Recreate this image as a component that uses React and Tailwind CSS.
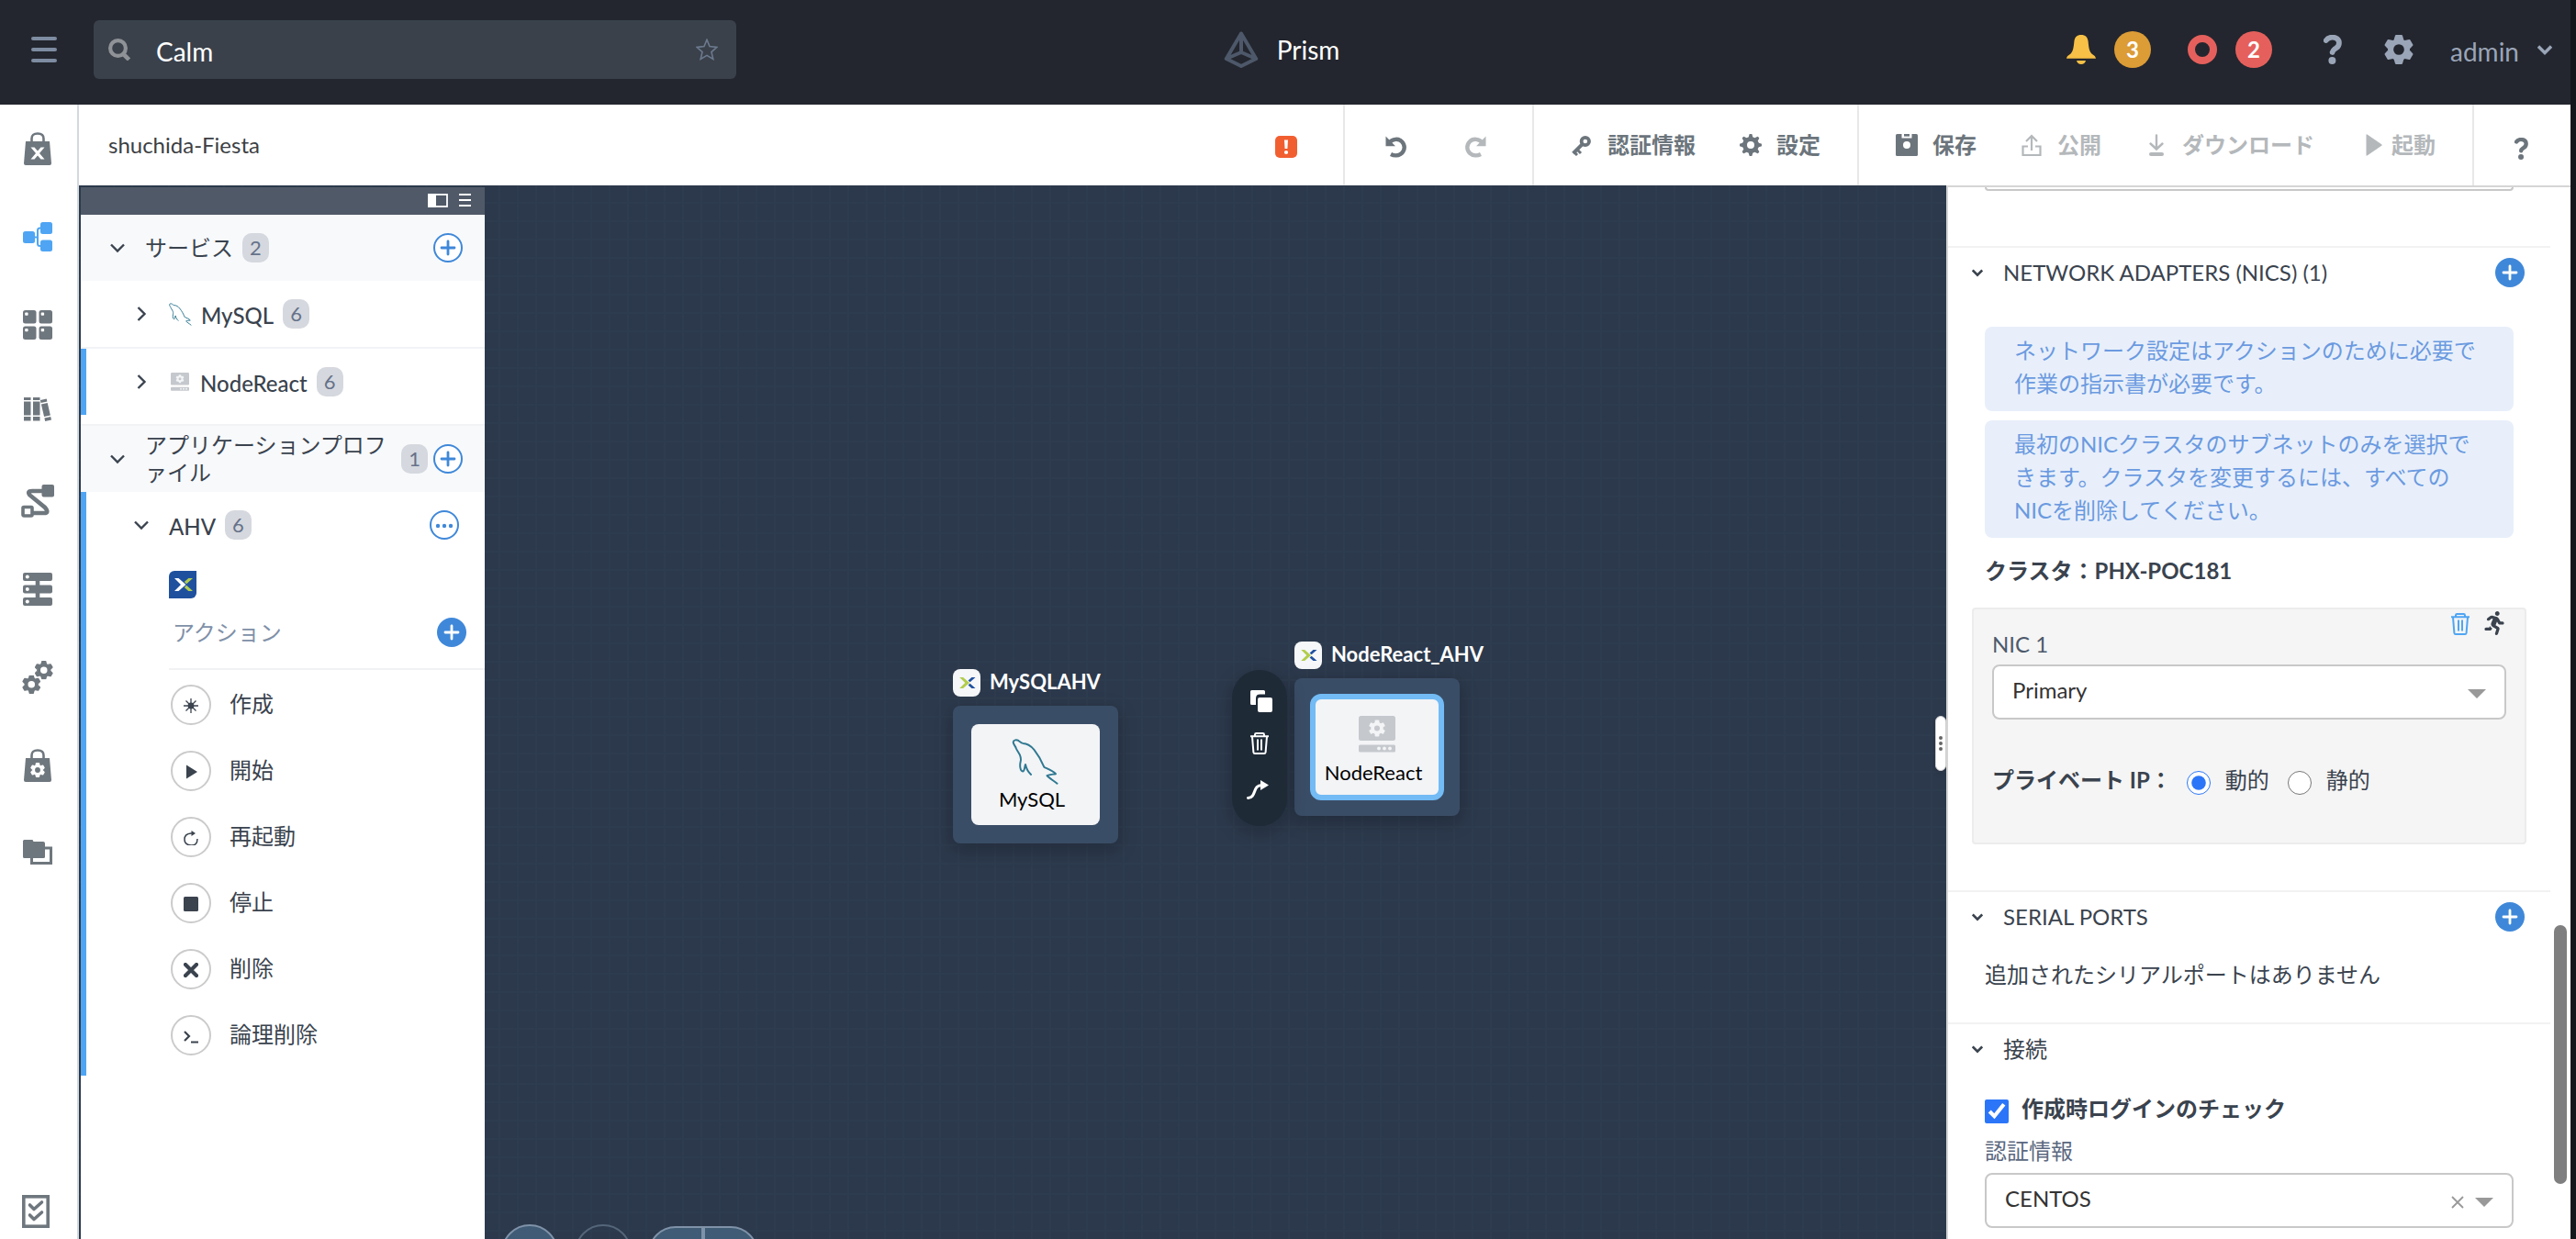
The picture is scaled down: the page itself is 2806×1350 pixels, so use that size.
import React from "react";
import { FaRunning } from "react-icons/fa";

/* ---------- icons ---------- */

function Gear({ className, teeth = 6, tooth = 7, hole = 4 }) {
  const ring = 9 - hole;
  return (
    <svg viewBox="0 0 24 24" className={className} fill="currentColor" aria-hidden="true">
      <circle cx="12" cy="12" r={hole + ring / 2} fill="none" stroke="currentColor" strokeWidth={ring} />
      {Array.from({ length: teeth }, (_, i) => (
        <path
          key={i}
          d={`M${12 - tooth / 2} 4 L${12 - tooth / 2 + 1} 0.6 Q${12 - tooth / 2 + 1.2} 0 ${12 - tooth / 2 + 1.8} 0 H${12 + tooth / 2 - 1.8} Q${12 + tooth / 2 - 1.2} 0 ${12 + tooth / 2 - 1} 0.6 L${12 + tooth / 2} 4 Z`}
          transform={`rotate(${(360 / teeth) * i} 12 12)`}
        />
      ))}
    </svg>
  );
}

function Question({ className }) {
  return (
    <svg viewBox="0 0 20 32" className={className} aria-hidden="true">
      <path d="M2.800 6C5 2.600 10 2.200 13 3.200C18 5 18 11.500 14 14.200C11.500 16 10 16.400 9.600 19" fill="none" stroke="currentColor" strokeWidth="5.800" strokeLinecap="round" />
      <circle cx="9.400" cy="28" r="4" fill="currentColor" />
    </svg>
  );
}

function Chevron({ className, width = 2.4 }) {
  return (
    <svg viewBox="0 0 16 16" className={className} fill="none" stroke="currentColor" strokeWidth={width} aria-hidden="true">
      <path d="M1 4.500L8 11.500L15 4.500" />
    </svg>
  );
}

function PlusCircle({ filled }) {
  return (
    <svg viewBox="0 0 32 32" className="size-8" aria-hidden="true">
      <circle cx="16" cy="16" r={filled ? 16 : 15} fill={filled ? "#3f88d9" : "#fff"} stroke={filled ? "none" : "#3f88d9"} strokeWidth="2" />
      <path d="M16 9V23M9 16H23" stroke={filled ? "#fff" : "#3f88d9"} strokeWidth="2.800" strokeLinecap="round" />
    </svg>
  );
}

function Trash({ className }) {
  return (
    <svg viewBox="0 0 20 24" className={className} fill="none" stroke="currentColor" strokeWidth="2" strokeLinejoin="round" aria-hidden="true">
      <path d="M0 4.200H20M5 4V2.400Q5 1 6.400 1H13.600Q15 1 15 2.400V4" />
      <path d="M2 4.500L3.400 21.600Q3.600 23 5 23H15Q16.400 23 16.600 21.600L18 4.500" />
      <path d="M8 7.500V19.500M12 7.500V19.500" />
    </svg>
  );
}

function CrossMark({ left, right, className }) {
  return (
    <svg viewBox="0 0 30 30" className={className} aria-hidden="true">
      <path d="M6 8H10.500L18.500 15L10.500 22H6L13 15Z" fill={left} />
      <path d="M26 8H21.300L16.800 12L19.200 14.200ZM26 22H21.300L16.800 18L19.200 15.800Z" fill={right} />
    </svg>
  );
}

function Dolphin({ className, width = 1.6 }) {
  return (
    <svg viewBox="-1 -1 52 51" className={className} fill="none" stroke="#2f7891" strokeWidth={width} strokeLinejoin="round" strokeLinecap="round" aria-hidden="true">
      <path d="M20 38.700C17 36 14.800 32 13.800 27.500C12.800 30 12.800 35.200 10.800 35.300C8.400 35 7 30 8.400 24C9.200 21 8.600 19.500 7.600 17C6 13.500 4.600 12.400 3.400 9.600C2.600 7 0.200 5 0.200 2.600C0.600 0 4 -0.200 6 1C8 2.400 9 3.600 11 4C16 4 20 7 23.400 11C29 18 32 24 34.600 30.600C39 32.600 44.600 34.600 47.400 38C44 38.600 40 38.600 37.800 40C39.600 42.400 45 45.400 49 48.700" />
    </svg>
  );
}

function Machine({ className }) {
  return (
    <svg viewBox="0 0 40 40" className={className} aria-hidden="true">
      <rect width="40" height="27" rx="2.500" fill="#c5c8cd" />
      <rect y="31.500" width="40" height="8" rx="1.500" fill="#c5c8cd" />
      <g fill="#f3f4f6">
        {[0, 60, 120].map((a) => (
          <rect key={a} x="17.600" y="4.500" width="4.800" height="18" rx="1" transform={`rotate(${a} 20 13.5)`} />
        ))}
        <circle cx="20" cy="13.500" r="6.800" />
        <circle cx="22" cy="35.500" r="1.900" />
        <circle cx="28" cy="35.500" r="1.900" />
        <circle cx="34" cy="35.500" r="1.900" />
      </g>
      <circle cx="20" cy="13.500" r="3" fill="#c5c8cd" />
    </svg>
  );
}

function Redo({ className }) {
  return (
    <svg viewBox="0 0 24 24" className={className} aria-hidden="true">
      <path d="M20 8C16.500 3 9.500 2.600 6 6.200C2.200 10.200 2.600 15.600 6 18.800C9.500 22 14.500 21.800 18 20" fill="none" stroke="currentColor" strokeWidth="4.400" />
      <path d="M23.500 0.600V11.200H13Z" fill="currentColor" />
    </svg>
  );
}

/* ---------- top bar ---------- */

function TopBar() {
  return (
    <header className="flex h-[114px] shrink-0 items-center bg-[#23262e] pb-1.5 text-white">
      <div className="flex flex-1 items-center">
        <button aria-label="メニュー" className="ml-[34px] flex w-7 flex-col gap-2">
          <span className="h-1 rounded-sm bg-[#7e8ca1]" />
          <span className="h-1 rounded-sm bg-[#7e8ca1]" />
          <span className="h-1 rounded-sm bg-[#7e8ca1]" />
        </button>
        <div className="ml-10 flex h-16 w-[700px] items-center rounded-md bg-[#3a414b] px-4">
          <svg viewBox="0 0 24 24" className="size-6 text-[#8f9297]" fill="none" stroke="currentColor" aria-hidden="true">
            <circle cx="10.500" cy="10.500" r="8.400" strokeWidth="4.200" />
            <path d="M16 16.500L22.500 23" strokeWidth="4.600" />
          </svg>
          <input aria-label="検索" defaultValue="Calm" className="ml-7 min-w-0 flex-1 bg-transparent pt-1 text-[28px] leading-9 outline-none" />
          <button aria-label="お気に入り" className="mr-1">
            <svg viewBox="0 0 24 24" className="size-6" fill="none" stroke="#6c7a8f" strokeWidth="1.600" aria-hidden="true">
              <path d="M12 1.300L15 8.600L22.900 9.400L17 14.600L18.800 22.400L12 18.400L5.200 22.400L7 14.600L1.100 9.400L9 8.600Z" />
            </svg>
          </button>
        </div>
      </div>
      <div className="flex items-center gap-5 pr-2">
        <svg viewBox="0 0 38 40" className="h-10 w-[38px]" fill="none" stroke="#4d586a" strokeWidth="4" strokeLinejoin="round" aria-hidden="true">
          <path d="M19 2.500L2.800 30L19 38L35.200 30ZM19 4V23M2.800 30L19 23L35.200 30" />
        </svg>
        <span className="text-[28px] leading-9">Prism</span>
      </div>
      <div className="flex flex-1 items-center justify-end">
        <svg viewBox="0 0 32 32" className="size-8" fill="#f7c046" aria-hidden="true">
          <path d="M16 0C11.500 0 9 2.400 8.400 7C7.800 13 7.400 17.500 4.600 20.600C3 22.400 0.600 22.600 0 25.800H32C31.400 22.600 29 22.400 27.400 20.600C24.600 17.500 24.200 13 23.600 7C23 2.400 20.500 0 16 0Z" />
          <path d="M11 28H21Q20 32 16 32Q12 32 11 28Z" />
        </svg>
        <span className="ml-5 flex size-10 items-center justify-center rounded-full bg-[#dc9c36] text-2xl font-bold">3</span>
        <span className="ml-10 size-8 rounded-full border-8 border-[#e5605c]" />
        <span className="ml-5 flex size-10 items-center justify-center rounded-full bg-[#e5605c] text-2xl font-bold">2</span>
        <button aria-label="ヘルプ" className="ml-14 text-[#9aa5b8]">
          <Question className="h-8 w-5" />
        </button>
        <button aria-label="設定メニュー" className="ml-[46px] text-[#9aa5b8]">
          <Gear className="size-8" tooth={8} hole={4.4} />
        </button>
        <button className="mr-5 ml-10 flex items-center gap-5 text-[28px] leading-9 text-[#9aa5b8]">
          <span className="pt-1">admin</span>
          <Chevron className="size-4" width={3.4} />
        </button>
      </div>
    </header>
  );
}

/* ---------- blueprint toolbar ---------- */

const tool = "flex items-center gap-4";

function Toolbar() {
  return (
    <div className="flex h-[88px] shrink-0 items-stretch bg-white text-2xl font-bold text-[#6c757c]">
      <div className="flex flex-1 items-center justify-between pr-[50px] pl-8">
        <h1 className="text-2xl font-normal text-[#3c3f44]">shuchida-Fiesta</h1>
        <button aria-label="エラー" className="mt-1">
          <svg viewBox="0 0 24 24" className="size-6" aria-hidden="true">
            <rect width="24" height="24" rx="5" fill="#f15f31" />
            <path d="M10 4.500H14L13.400 14H10.600Z" fill="#fff" />
            <circle cx="12" cy="18" r="2.100" fill="#fff" />
          </svg>
        </button>
      </div>
      <div className="flex items-center gap-[62px] border-l-2 border-[#e8e8e8] pt-1 pr-[50px] pl-11">
        <button aria-label="元に戻す" className="-scale-x-100"><Redo className="size-6" /></button>
        <button aria-label="やり直す" disabled className="text-[#b4b8bb]"><Redo className="size-6" /></button>
      </div>
      <div className="flex items-center gap-12 border-l-2 border-[#e8e8e8] pr-10 pl-10">
        <button className={tool}>
          <svg viewBox="0 0 24 24" className="size-6" fill="none" stroke="currentColor" aria-hidden="true">
            <circle cx="15.800" cy="8" r="4.200" strokeWidth="3.800" />
            <path d="M12.600 11.200L2.600 21.200" strokeWidth="4" />
            <path d="M7 17L11 21M4 20L7 23" strokeWidth="3" />
          </svg>
          認証情報
        </button>
        <button className={tool}>
          <Gear className="size-6" teeth={8} tooth={5} hole={4} />
          設定
        </button>
      </div>
      <div className="flex items-center border-l-2 border-[#e8e8e8] pr-10 pl-10">
        <button className={tool}>
          <svg viewBox="0 0 24 24" className="size-6" aria-hidden="true">
            <rect width="24" height="24" rx="1.500" fill="currentColor" />
            <path d="M6.500 0H17.500V4.500H6.500Z" fill="#fff" />
            <path d="M9 0H15V2.600H9Z" fill="currentColor" />
            <circle cx="12" cy="12" r="4" fill="#fff" />
          </svg>
          保存
        </button>
        <button disabled className="ml-12 flex items-center gap-4 text-[#b4b8bb]">
          <svg viewBox="0 0 24 24" className="size-6" fill="none" stroke="currentColor" strokeWidth="2.200" aria-hidden="true">
            <path d="M8 13.500H2.500V23H21.500V13.500H16M12 18V2M6 8L12 2L18 8" />
          </svg>
          公開
        </button>
        <button disabled className="ml-12 flex items-center gap-4 text-[#b4b8bb]">
          <svg viewBox="0 0 24 24" className="size-6" fill="none" stroke="currentColor" strokeWidth="2.400" strokeLinecap="round" aria-hidden="true">
            <path d="M12 1.500V16M5.500 10.500L12 16.500L18.500 10.500" />
            <path d="M6 22H18" strokeWidth="4" />
          </svg>
          ダウンロード
        </button>
        <button disabled className="ml-14 flex items-center gap-2.5 text-[#b4b8bb]">
          <svg viewBox="0 0 18 24" className="h-6 w-[18px]" fill="currentColor" aria-hidden="true">
            <path d="M0.500 1.200Q0.500 -0.400 1.900 0.700L17.200 11.200Q18.200 12 17.200 12.800L1.900 23.300Q0.500 24.400 0.500 22.800Z" />
          </svg>
          起動
        </button>
      </div>
      <button aria-label="ブループリントのヘルプ" className="flex items-center border-l-2 border-[#e8e8e8] pt-2 pr-[46px] pl-11">
        <Question className="h-6 w-[15px]" />
      </button>
    </div>
  );
}

/* ---------- navigation rail ---------- */

const railItems = [
  ["マーケットプレイス", <svg viewBox="0 0 30 36" className="h-9 w-[30px]"><path d="M2 10H28L30 34Q30 36 28 36H2Q0 36 0 34Z" fill="currentColor" /><path d="M8.500 12V7Q8.500 1.500 15 1.500T21.500 7V12" fill="none" stroke="currentColor" strokeWidth="2.600" /><path d="M7.500 16.500H11.500L15 20.500L18.500 16.500H22.500L17 23L22.500 29.500H18.500L15 25.500L11.500 29.500H7.500L13 23Z" fill="#fff" /></svg>],
  ["ブループリント", <svg viewBox="0 0 32 32" className="size-8 text-[#4fa5f3]"><g fill="currentColor"><rect y="10" width="13" height="13" rx="2.500" /><rect x="19" width="13" height="13" rx="2.500" /><rect x="19" y="19.500" width="13" height="12.500" rx="2.500" /></g><path d="M12 16.500H16M20 6.500H18.500Q16 6.500 16 9V23.500Q16 26 18.500 26H20" fill="none" stroke="currentColor" strokeWidth="2" /></svg>],
  ["アプリケーション", <svg viewBox="0 0 32 32" className="size-8">{[[0, 0], [17.5, 0], [0, 17.5], [17.5, 17.5]].map(([x, y]) => (<g key={`${x}-${y}`}><rect x={x} y={y} width="14.500" height="14.500" rx="2.500" fill="currentColor" /><rect x={x + 2.2} y={y + 2.6} width="3.400" height="3.200" rx="0.800" fill="#fff" /></g>))}</svg>],
  ["ライブラリ", <svg viewBox="0 -1 30 36" className="h-9 w-[30px]" fill="currentColor"><path d="M0 0H7.500V3H0ZM0 4.500H7.500V19.500H0ZM0 21H7.500V25.500H0ZM10 0H17.500V3H10ZM10 4.500H17.500V19.500H10ZM10 21H17.500V25.500H10Z" /><g transform="rotate(-13 24 14)"><path d="M20.500 2H27.500V5H20.500ZM20.500 6.500H27.500V20.500H20.500ZM20.500 22H27.500V25.500H20.500Z" /></g></svg>],
  ["ランブック", <svg viewBox="0 0 36 36" className="size-9"><rect x="22.500" width="13.500" height="13.500" rx="2" fill="currentColor" /><path d="M24 7H12Q6 7 9.500 11.500L26 25Q31 31 25 31H13" fill="none" stroke="currentColor" strokeWidth="4.600" /><rect x="2" y="24.500" width="10" height="9.500" rx="1" fill="#fff" stroke="currentColor" strokeWidth="3.600" /></svg>],
  ["プロバイダ", <svg viewBox="0 0 32 36" className="h-9 w-8">{[0, 13.5, 27].map((y) => (<g key={y}><rect y={y} width="32" height="9" rx="2" fill="currentColor" /><circle cx="4.800" cy={y + 4.5} r="2" fill="#fff" /></g>))}<path d="M16 8V28" stroke="currentColor" strokeWidth="4.600" /></svg>],
  ["設定", <svg viewBox="0 0 34 36" className="h-9 w-[34px]"><svg x="13.500" y="0" width="20.500" height="20.500"><Gear teeth={6} tooth={8} hole={4.4} /></svg><svg x="0" y="15.500" width="20.500" height="20.500"><Gear teeth={6} tooth={8} hole={4.4} /></svg></svg>],
  ["マーケットプレイス管理", <svg viewBox="0 0 30 36" className="h-9 w-[30px]"><path d="M2 10H28L30 34Q30 36 28 36H2Q0 36 0 34Z" fill="currentColor" /><path d="M8.500 12V7Q8.500 1.500 15 1.500T21.500 7V12" fill="none" stroke="currentColor" strokeWidth="2.600" /><svg x="7" y="15" width="16" height="16" className="text-white"><Gear teeth={6} tooth={8} hole={4.4} /></svg></svg>],
  ["プロジェクト", <svg viewBox="0 -3 32 36" className="h-9 w-8"><path d="M9.500 17V25.500H30.500V9H23" fill="none" stroke="currentColor" strokeWidth="3" /><path d="M0 1.500Q0 0 1.500 0H10.500L11.500 2H22Q24 2 24 4V18.500Q24 20 22.500 20H1.500Q0 20 0 18.500Z" fill="currentColor" /></svg>],
];

function Rail() {
  return (
    <nav className="flex w-[86px] shrink-0 flex-col items-center border-r-2 border-[#d3d9df] bg-white pt-[30px] pr-0.5 pb-3 text-[#6f777e]">
      <div className="flex flex-col items-center gap-[60px]">
        {railItems.map(([label, icon]) => (
          <a key={label} href="#" aria-label={label} className="flex size-9 items-center justify-center">
            {icon}
          </a>
        ))}
      </div>
      <a href="#" aria-label="タスク" className="mt-auto mr-1">
        <svg viewBox="0 0 30 36" className="h-9 w-[30px]" fill="none" stroke="currentColor" strokeWidth="3.600" aria-hidden="true">
          <rect x="1.800" y="1.800" width="26.400" height="32.400" />
          <path d="M8.500 11L13 15.500L21.500 8M8.500 22L13 26.500L21.500 19" strokeLinecap="round" strokeLinejoin="round" />
        </svg>
      </a>
    </nav>
  );
}

/* ---------- left tree ---------- */

function Count({ children }) {
  return (
    <span className="flex h-8 min-w-7 shrink-0 items-center justify-center rounded-[10px] bg-[#d5d8de] px-2 text-[22px] text-[#66728a]">
      {children}
    </span>
  );
}

const actions = [
  ["作成", <path key="p" d="M8 0V16M0 8H16M2.500 2.500L13.500 13.500M13.500 2.500L2.500 13.500" stroke="currentColor" strokeWidth="1.300" />, true],
  ["開始", <path key="p" d="M3 0.500L15 8L3 15.500Z" fill="currentColor" />],
  ["再起動", <g key="p"><path d="M9 3H8Q1 3.500 1 9.500T8 16T15 9" fill="none" stroke="currentColor" strokeWidth="1.500" /><path d="M8.500 0L13 3L8.500 6Z" fill="currentColor" /></g>],
  ["停止", <rect key="p" width="16" height="16" rx="1.500" fill="currentColor" />],
  ["削除", <path key="p" d="M2 2L14 14M14 2L2 14" stroke="currentColor" strokeWidth="4.200" strokeLinecap="round" />],
  ["論理削除", <path key="p" d="M1 3L6 8L1 13M8 14.500H16" fill="none" stroke="currentColor" strokeWidth="2.200" />],
];

function Tree() {
  return (
    <aside className="mt-0.5 ml-0.5 flex w-[440px] shrink-0 flex-col bg-white text-2xl text-[#3a434e]">
      <div className="flex h-[30px] shrink-0 items-center justify-end gap-3 bg-[#505967] pr-[15px] pb-0.5">
        <button aria-label="パネル">
          <svg viewBox="0 0 22 15" className="h-[15px] w-[22px]" aria-hidden="true">
            <rect x="1" y="1" width="20" height="13" fill="none" stroke="#fff" strokeWidth="1.800" />
            <rect width="9" height="15" fill="#fff" />
          </svg>
        </button>
        <button aria-label="一覧">
          <svg viewBox="0 0 13 14" className="h-3.5 w-[13px]" stroke="#fff" strokeWidth="2" aria-hidden="true">
            <path d="M0 1H13M0 7H13M0 13H13" />
          </svg>
        </button>
      </div>

      <div className="flex h-[72px] shrink-0 items-center bg-[#f7f9fb] pr-6 pl-8">
        <Chevron className="size-4" />
        <span className="mr-2.5 ml-[22px]">サービス</span>
        <Count>2</Count>
        <button aria-label="サービスを追加" className="ml-auto"><PlusCircle /></button>
      </div>

      <div className="flex h-[74px] shrink-0 items-center border-b-2 border-[#f1f3f5] pl-[58px]">
        <Chevron className="size-4 -rotate-90" />
        <Dolphin className="mr-2.5 ml-[22px] size-[25px]" width={2} />
        <span className="mr-2.5 pt-1 font-medium">MySQL</span>
        <Count>6</Count>
      </div>
      <div className="flex h-[72px] shrink-0 items-center border-l-[6px] border-[#4fa5f3] pl-[52px]">
        <Chevron className="size-4 -rotate-90" />
        <Machine className="mr-3 ml-6 size-5" />
        <span className="mr-2.5 pt-1 font-medium">NodeReact</span>
        <Count>6</Count>
      </div>

      <div className="mt-2.5 flex h-[74px] shrink-0 items-center border-t-2 border-[#f1f3f5] bg-[#f7f9fb] pr-6 pl-8">
        <Chevron className="size-4 shrink-0" />
        <span className="ml-[22px] flex-1 leading-[30px]">アプリケーションプロファイル</span>
        <Count>1</Count>
        <button aria-label="アプリケーションプロファイルを追加" className="ml-1.5"><PlusCircle /></button>
      </div>

      <div className="border-l-[6px] border-[#4fa5f3] pb-[22px]">
        <div className="flex h-[72px] items-center pr-7 pl-[52px]">
          <Chevron className="size-4" />
          <span className="mr-2.5 ml-[22px] pt-1 font-medium">AHV</span>
          <Count>6</Count>
          <button aria-label="その他" className="ml-auto">
            <svg viewBox="0 0 32 32" className="size-8" aria-hidden="true">
              <circle cx="16" cy="16" r="15" fill="#fff" stroke="#3f88d9" strokeWidth="2" />
              <g fill="#3f88d9"><circle cx="9" cy="17" r="2.200" /><circle cx="16" cy="17" r="2.200" /><circle cx="23" cy="17" r="2.200" /></g>
            </svg>
          </button>
        </div>
        <div className="ml-[90px]">
          <div className="mt-3.5 flex size-[30px] items-center justify-center rounded-tl-md rounded-br-md bg-[#1f509e]">
            <CrossMark left="#fff" right="#b3cd4d" className="size-[30px]" />
          </div>
          <div className="flex h-[78px] items-center justify-between border-b-2 border-[#f1f2f4] pr-5 pb-0.5 pl-1 text-[#8090a8]">
            <span>アクション</span>
            <button aria-label="アクションを追加"><PlusCircle filled /></button>
          </div>
          <ul className="mt-4 flex flex-col gap-7 pl-0.5">
            {actions.map(([name, icon, dot]) => (
              <li key={name}>
                <button className="flex items-center gap-5">
                  <span className="flex size-11 items-center justify-center rounded-full border-2 border-[#cbcbcb] pt-0.5">
                    <svg viewBox="0 0 16 16" className="size-4" aria-hidden="true">
                      {icon}
                      {dot && <circle cx="8" cy="8" r="3.400" fill="currentColor" />}
                    </svg>
                  </span>
                  <span className="pb-0.5">{name}</span>
                </button>
              </li>
            ))}
          </ul>
        </div>
      </div>
    </aside>
  );
}

/* ---------- canvas ---------- */

function NodeGroup({ place, title, children }) {
  return (
    <section className={`absolute flex w-[180px] flex-col gap-2.5 ${place}`}>
      <h2 className="flex h-[30px] items-center gap-2.5 text-[22px] font-bold whitespace-nowrap text-white">
        <span className="flex size-[30px] shrink-0 items-center justify-center rounded-lg bg-[#f5f7f9]">
          <CrossMark left="#b3cd4d" right="#1f509e" className="size-[26px]" />
        </span>
        <span className="pb-1">{title}</span>
      </h2>
      <div className="flex h-[150px] items-center justify-center rounded-lg bg-[#3a4d66] shadow-[0_6px_20px_rgba(0,0,0,0.25)]">
        {children}
      </div>
    </section>
  );
}

function Canvas() {
  return (
    <main className="relative min-w-0 flex-1 overflow-hidden">
      <NodeGroup place="left-[510px] top-[527px]" title="MySQLAHV">
        <button className="flex h-[110px] w-[140px] flex-col items-center rounded-lg bg-[#f3f4f6] pt-4 pr-2 text-[22px] leading-7 text-black">
          <Dolphin className="mb-0.5 ml-2 h-[50px] w-[52px]" width={2} />
          MySQL
        </button>
      </NodeGroup>
      <NodeGroup place="left-[882px] top-[497px]" title="NodeReact_AHV">
        <button className="flex h-[116px] w-[146px] flex-col items-center rounded-xl border-[6px] border-[#72bbf5] bg-[#f3f4f6] pt-[18px] text-[22px] leading-7 text-black">
          <Machine className="mb-2 size-10" />
          <span className="pr-2">NodeReact</span>
        </button>
      </NodeGroup>

      <div className="absolute top-[528px] left-[814px] flex h-[170px] w-[60px] flex-col items-center rounded-full bg-[#1f2a37] pt-[22px] text-white shadow-[0_6px_20px_rgba(0,0,0,0.25)]">
        <button aria-label="複製" className="mb-[22px] ml-1">
          <svg viewBox="0 0 24 24" className="size-6" fill="currentColor" aria-hidden="true">
            <path d="M1.500 0H14.500Q16 0 16 1.500V4.600H10.500Q6 4.600 6 9V16H1.500Q0 16 0 14.500V1.500Q0 0 1.500 0Z" />
            <rect x="8" y="8" width="16" height="16" rx="2" />
          </svg>
        </button>
        <button aria-label="削除" className="mb-7"><Trash className="h-6 w-5" /></button>
        <button aria-label="依存関係" className="mr-1">
          <svg viewBox="0 0 24 22" className="h-[22px] w-6" aria-hidden="true">
            <path d="M1.500 19.500C11 19 6 5 17 5.500" fill="none" stroke="currentColor" strokeWidth="3" strokeLinecap="round" />
            <path d="M15 0L24 5.600L15 11Z" fill="currentColor" />
          </svg>
        </button>
      </div>

      <div className="absolute -bottom-[46px] left-[18px] flex items-end">
        <button aria-label="縮小" className="size-[62px] rounded-full border-2 border-[#7f92a8] bg-[#3f5b75]" />
        <button aria-label="元のサイズ" disabled className="ml-[18px] size-[62px] rounded-full border-2 border-[#56667a]" />
        <div className="ml-[18px] flex h-[60px] w-[120px] overflow-hidden rounded-full border-2 border-[#7f92a8] bg-[#3f5b75]">
          <button aria-label="戻る" className="flex-1 border-r-4 border-[#7f92a8]" />
          <button aria-label="進む" className="flex-1" />
        </div>
      </div>

      <button aria-label="パネルの幅を変更" className="absolute top-[578px] right-0 flex h-[60px] w-3 flex-col items-center justify-center gap-0.5 rounded-md border border-[#d0d0d0] bg-white shadow-md">
        <span className="size-1 rounded-full bg-[#666]" />
        <span className="size-1 rounded-full bg-[#666]" />
        <span className="size-1 rounded-full bg-[#666]" />
      </button>
    </main>
  );
}

/* ---------- right panel ---------- */

function SectionTitle({ children, onAdd }) {
  return (
    <div className="flex h-[60px] items-center border-t-2 border-[#f2f2f2] pr-7 pb-1 pl-[26px]">
      <Chevron className="size-3" width={3.6} />
      <h3 className="ml-[22px]">{children}</h3>
      {onAdd && <button aria-label={onAdd} className="ml-auto"><PlusCircle filled /></button>}
    </div>
  );
}

function Select({ id, value, clearable }) {
  return (
    <div className="relative">
      <select id={id} defaultValue={value} className="h-[60px] w-full appearance-none rounded-lg border-2 border-[#c8c8c8] bg-white pb-1 pl-5 text-2xl text-[#333]">
        <option>{value}</option>
      </select>
      <span className="pointer-events-none absolute inset-y-0 right-[22px] flex items-center gap-3 pt-1">
        {clearable && (
          <svg viewBox="0 0 14 14" className="size-3.5" stroke="#999" strokeWidth="1.800" aria-hidden="true">
            <path d="M1 1L13 13M13 1L1 13" />
          </svg>
        )}
        <svg viewBox="0 0 20 10" className="h-2.5 w-5" fill="#999" aria-hidden="true"><path d="M0 0H20L10 10Z" /></svg>
      </span>
    </div>
  );
}

function Notice({ children }) {
  return <p className="rounded-lg bg-[#e8effa] px-8 pt-2 pb-3 leading-9 text-[#6b9ae0]">{children}</p>;
}

function Inspector() {
  return (
    <aside className="flex w-[680px] shrink-0 overflow-hidden border-t-2 border-l-2 border-[#d5d5d5] bg-white text-2xl text-[#3a434e]">
      <div className="min-w-0 flex-1">
        <div className="mr-10 mb-[60px] ml-10 h-1 rounded-b-lg border-x-2 border-b-2 border-[#c8c8c8]" />

        <SectionTitle onAdd="NICを追加">NETWORK ADAPTERS (NICS) (1)</SectionTitle>
        <div className="mt-7 mr-10 ml-10 flex flex-col gap-2.5">
          <Notice>ネットワーク設定はアクションのために必要で作業の指示書が必要です。</Notice>
          <Notice>最初のNICクラスタのサブネットのみを選択で<br />きます。クラスタを変更するには、すべての<br />NICを削除してください。</Notice>
        </div>
        <p className="mt-[18px] mb-[22px] ml-10 leading-9 font-bold">クラスタ：PHX-POC181</p>
        <div className="mr-[26px] ml-[26px] h-[258px] rounded border-2 border-[#ececec] bg-[#f5f5f5] px-5">
          <div className="flex h-7 items-end justify-end gap-3.5">
            <button aria-label="NICを削除" className="text-[#4fa5f3]"><Trash className="h-6 w-5" /></button>
            <button aria-label="ランタイム"><FaRunning className="size-[26px]" /></button>
          </div>
          <label htmlFor="nic" className="mb-2 block h-6 leading-5 text-[#4d5a6c]">NIC 1</label>
          <Select id="nic" value="Primary" />
          <fieldset className="mt-12 flex items-center leading-9">
            <legend className="float-left mr-4 font-bold">プライベート IP：</legend>
            <input id="dyn" type="radio" name="ip" defaultChecked className="mt-1.5 size-[26px] accent-[#2b76f8]" />
            <label htmlFor="dyn" className="mr-5 ml-4">動的</label>
            <input id="sta" type="radio" name="ip" className="mt-1.5 size-[26px]" />
            <label htmlFor="sta" className="ml-4">静的</label>
          </fieldset>
        </div>

        <div className="mt-[50px]">
          <SectionTitle onAdd="シリアルポートを追加">SERIAL PORTS</SectionTitle>
          <p className="mt-3.5 mb-[34px] ml-10 leading-9">追加されたシリアルポートはありません</p>
        </div>

        <SectionTitle>接続</SectionTitle>
        <div className="mt-4 mr-10 ml-10">
          <div className="flex items-center leading-9">
            <input id="login" type="checkbox" defaultChecked className="mt-1.5 size-[26px] accent-[#2b76f8]" />
            <label htmlFor="login" className="ml-3.5 font-bold">作成時ログインのチェック</label>
          </div>
          <label htmlFor="cred" className="mt-2.5 mb-1.5 block leading-9 text-[#5b6880]">認証情報</label>
          <Select id="cred" value="CENTOS" clearable />
        </div>
      </div>
      <div className="w-[22px] shrink-0 pt-[804px] pl-1">
        <div className="h-[282px] w-3.5 rounded-full bg-[#7f7f7f]" />
      </div>
    </aside>
  );
}

export default function App() {
  return (
    <div className="flex h-screen flex-col overflow-hidden border-r-[6px] border-[#14171b] bg-white font-['Lato','Noto_Sans_CJK_JP',sans-serif]">
      <TopBar />
      <div className="flex min-h-0 flex-1">
        <Rail />
        <div className="flex min-w-0 flex-1 flex-col">
          <Toolbar />
          <div className="flex min-h-0 flex-1 bg-[#2c394c] bg-[linear-gradient(to_right,#2e3c4f_2px,transparent_2px),linear-gradient(to_bottom,#2e3c4f_2px,transparent_2px)] bg-[size:20px_20px] bg-[position:17px_18px]">
            <Tree />
            <Canvas />
            <Inspector />
          </div>
        </div>
      </div>
    </div>
  );
}
